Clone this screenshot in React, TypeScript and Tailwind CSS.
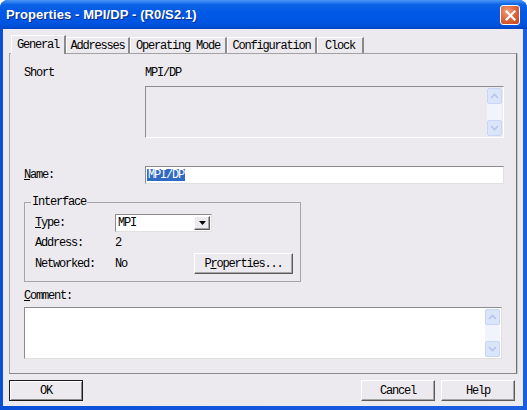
import React from "react";

const Chevron = ({ up }: { up?: boolean }) => (
  <svg width="9" height="6" viewBox="0 0 9 6">
    <path
      d={up ? "M1 5 L4.5 1.5 L8 5" : "M1 1 L4.5 4.5 L8 1"}
      fill="none"
      stroke="#b3c5ea"
      strokeWidth="1.6"
    />
  </svg>
);

const ScrollBar = () => (
  <div className="w-[15px] flex flex-col justify-between bg-[#f1f4fb] my-[1px] mr-[1px]">
    <div className="h-[16px] flex items-center justify-center bg-[#dbe5fa] border border-[#c8d6f4] rounded-[2px]">
      <Chevron up />
    </div>
    <div className="h-[16px] flex items-center justify-center bg-[#dbe5fa] border border-[#c8d6f4] rounded-[2px]">
      <Chevron />
    </div>
  </div>
);

const Tab = ({ label, w, active }: { label: string; w: string; active?: boolean }) => (
  <div
    className={
      "flex items-center justify-center border-t border-l border-t-white border-l-white border-r-2 border-r-[#8a8a8a] bg-[#eceaee] " +
      w +
      (active ? " h-[19px] relative z-10 pb-[1px]" : " h-[16px] mb-[1px]")
    }
  >
    {label}
  </div>
);

const raised =
  "border border-t-white border-l-white border-r-[#5a5a5a] border-b-[#5a5a5a] shadow-[inset_-1px_-1px_0_#a6a6a6] bg-[#eceaee]";

export default function App() {
  return (
    <div className="w-[527px] h-[410px] bg-white font-['Liberation_Mono',monospace] text-[12px] tracking-[-1.2px] text-black">
      <div className="w-[527px] h-[410px] flex flex-col rounded-t-[8px] overflow-hidden bg-[linear-gradient(to_right,#0b4fd9,#1c5ee0)]">
        {/* Title bar */}
        <div className="h-[29px] shrink-0 flex items-center pl-[6px] pr-[7px] pt-[1px] bg-[linear-gradient(to_bottom,#4a96f7_0%,#2b7ef0_8%,#0c62e6_16%,#0059e6_45%,#0056e2_75%,#0050d8_90%,#0044c0_100%)]">
          <span className="font-['Liberation_Sans',Arial,sans-serif] font-bold text-[13px] tracking-[0.1px] text-white [text-shadow:1px_1px_0_#0b2d8a]">
            Properties - MPI/DP - (R0/S2.1)
          </span>
          <div className="ml-auto w-[20px] h-[20px] rounded-[3px] border border-white flex items-center justify-center bg-[radial-gradient(circle_at_35%_30%,#f0a080_0%,#e2683f_45%,#c2401b_100%)]">
            <svg width="11" height="11" viewBox="0 0 11 11">
              <path d="M1.5 1.5 L9.5 9.5 M9.5 1.5 L1.5 9.5" stroke="white" strokeWidth="2.2" strokeLinecap="square" />
            </svg>
          </div>
        </div>

        {/* Body */}
        <div className="flex-1 ml-[3px] mr-[4px] mb-[4px] bg-[#eceaee] flex flex-col px-[6px] pt-[6px]">
          {/* Tabs */}
          <div className="flex items-end h-[19px] -mb-[1px] pl-[2px]">
            <Tab label="General" w="w-[55px]" active />
            <Tab label="Addresses" w="w-[64px]" />
            <Tab label="Operating Mode" w="w-[97px]" />
            <Tab label="Configuration" w="w-[90px]" />
            <Tab label="Clock" w="w-[47px]" />
          </div>

          {/* Panel */}
          <div className="h-[321px] border border-[#a2a2a2] border-r-[#707070] border-b-[#8a8a8a] shadow-[1px_0_0_#c8c8c8] flex flex-col pl-[14px] pt-[12px]">
            <div className="flex items-center h-[14px]">
              <span className="w-[121px]">Short</span>
              <span>MPI/DP</span>
            </div>
            <div className="ml-[121px] mt-[6px] w-[359px] h-[52px] border border-t-[#8c8c8c] border-l-[#8c8c8c] border-b-white border-r-white flex justify-end">
              <ScrollBar />
            </div>

            <div className="mt-[28px] flex items-center h-[18px]">
              <span className="w-[121px]">
                <span className="underline underline-offset-[1px]">N</span>ame:
              </span>
              <div className="w-[359px] h-[18px] bg-white border border-t-[#8c8c8c] border-l-[#8c8c8c] border-b-[#e0e0e0] border-r-[#e0e0e0] flex items-center pl-[1px]">
                <span className="bg-[#316ac5] text-white leading-[12px] px-[1px]">MPI/DP</span>
              </div>
            </div>

            <fieldset className="mt-[12px] w-[277px] border border-[#a6a6a6]">
              <legend className="ml-[6px] px-[1px] leading-[12px]">Interface</legend>
              <div className="pl-[10px] pr-[7px] pt-[6px] pb-[7px] flex flex-col">
                <div className="flex items-center h-[18px]">
                  <span className="w-[80px]">
                    <span className="underline underline-offset-[1px]">T</span>ype:
                  </span>
                  <div className="w-[97px] h-[18px] bg-white border border-t-[#8c8c8c] border-l-[#8c8c8c] border-b-[#e0e0e0] border-r-[#e0e0e0] flex items-center pl-[2px]">
                    <span>MPI</span>
                    <div className={"ml-auto mr-[1px] w-[16px] h-[14px] flex items-center justify-center " + raised}>
                      <svg width="7" height="4" viewBox="0 0 7 4">
                        <path d="M0 0 H7 L3.5 4 Z" fill="black" />
                      </svg>
                    </div>
                  </div>
                </div>
                <div className="flex items-center h-[14px] mt-[4px]">
                  <span className="w-[80px]">Address:</span>
                  <span>2</span>
                </div>
                <div className="flex items-center h-[21px] mt-[3px]">
                  <span className="w-[80px]">Networked:</span>
                  <span className="w-[79px]">No</span>
                  <div className={"w-[99px] h-[21px] flex items-center justify-center " + raised}>
                    <span>
                      P<span className="underline underline-offset-[1px]">r</span>operties...
                    </span>
                  </div>
                </div>
              </div>
            </fieldset>

            <div className="mt-[7px] h-[14px] flex items-center">
              <span>
                <span className="underline underline-offset-[1px]">C</span>omment:
              </span>
            </div>
            <div className="mt-[4px] w-[478px] h-[52px] bg-white border border-t-[#8c8c8c] border-l-[#8c8c8c] border-b-[#e0e0e0] border-r-[#e0e0e0] flex justify-end">
              <ScrollBar />
            </div>
          </div>

          {/* Buttons */}
          <div className="mt-[6px] h-[21px] flex pr-[2px]">
            <div className="w-[74px] h-[21px] flex items-center justify-center border border-[#1a1a1a] bg-[#eceaee] shadow-[inset_1px_1px_0_white,inset_-1px_-1px_0_#8a8a8a]">
              OK
            </div>
            <div className={"ml-auto w-[74px] h-[21px] flex items-center justify-center " + raised}>Cancel</div>
            <div className={"ml-[6px] w-[74px] h-[21px] flex items-center justify-center " + raised}>Help</div>
          </div>
        </div>
      </div>
    </div>
  );
}
